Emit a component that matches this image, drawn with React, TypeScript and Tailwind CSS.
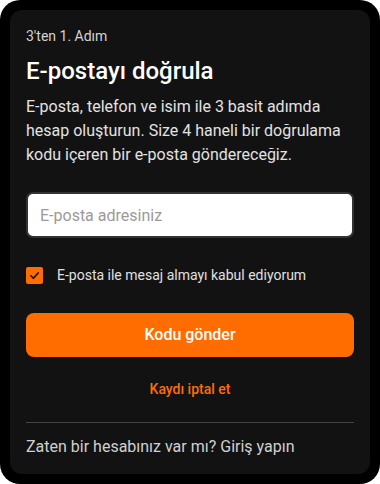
import { useState } from "react";

export default function App() {
  const [checked, setChecked] = useState(true);
  const [email, setEmail] = useState("");

  return (
    <div className="w-[380px] h-[484px] bg-white">
      <div className="w-full h-full bg-black rounded-[20px] p-[10px]">
        <div
          className="h-full bg-[#121212] rounded-[12px] px-4 pt-4 flex flex-col"
          style={{ fontFamily: "Roboto, 'Noto Sans', sans-serif" }}
        >
          <div className="text-[14px] leading-[20px] text-[#d4d4d4]">3'ten 1. Adım</div>
          <h1 className="mt-[10px] text-[24px] leading-[30px] font-medium text-white">
            E-postayı doğrula
          </h1>
          <p className="mt-[9px] text-[16px] leading-[24px] text-[#e2e2e2]">
            E-posta, telefon ve isim ile 3 basit adımda hesap oluşturun. Size 4 haneli bir
            doğrulama kodu içeren bir e-posta göndereceğiz.
          </p>

          <input
            type="email"
            value={email}
            onChange={(e) => setEmail(e.target.value)}
            placeholder="E-posta adresiniz"
            className="mt-[25px] h-[46px] w-full rounded-[7px] border-2 border-[#333] bg-white px-3 text-[16px] text-[#222] placeholder:text-[#9a9a9a] outline-none"
          />

          <label className="mt-[27px] flex items-center gap-[14px] cursor-pointer">
            <button
              type="button"
              onClick={() => setChecked(!checked)}
              className={
                checked
                  ? "w-[17px] h-[17px] rounded-[2px] bg-[#ff6d00] flex items-center justify-center"
                  : "w-[17px] h-[17px] rounded-[2px] border-2 border-[#888]"
              }
            >
              {checked && (
                <svg width="11" height="11" viewBox="0 0 12 12" fill="none">
                  <path d="M2 6.3 L4.8 9 L10 3.2" stroke="#111" strokeWidth="1.8" strokeLinecap="round" strokeLinejoin="round" />
                </svg>
              )}
            </button>
            <span className="text-[14px] leading-[20px] text-[#e0e0e0]">
              E-posta ile mesaj almayı kabul ediyorum
            </span>
          </label>

          <button
            type="button"
            className="mt-[28px] h-[44px] w-full rounded-[8px] bg-[#ff6d00] text-[16px] font-medium text-white"
          >
            Kodu gönder
          </button>

          <button
            type="button"
            className="mt-[22px] self-center text-[14px] leading-[20px] font-medium text-[#ff6d00]"
          >
            Kaydı iptal et
          </button>

          <div className="mt-[23px] h-px bg-[#444]" />

          <div className="mt-[12px] text-[16px] leading-[24px] text-[#d0d0d0]">
            Zaten bir hesabınız var mı? Giriş yapın
          </div>
        </div>
      </div>
    </div>
  );
}
